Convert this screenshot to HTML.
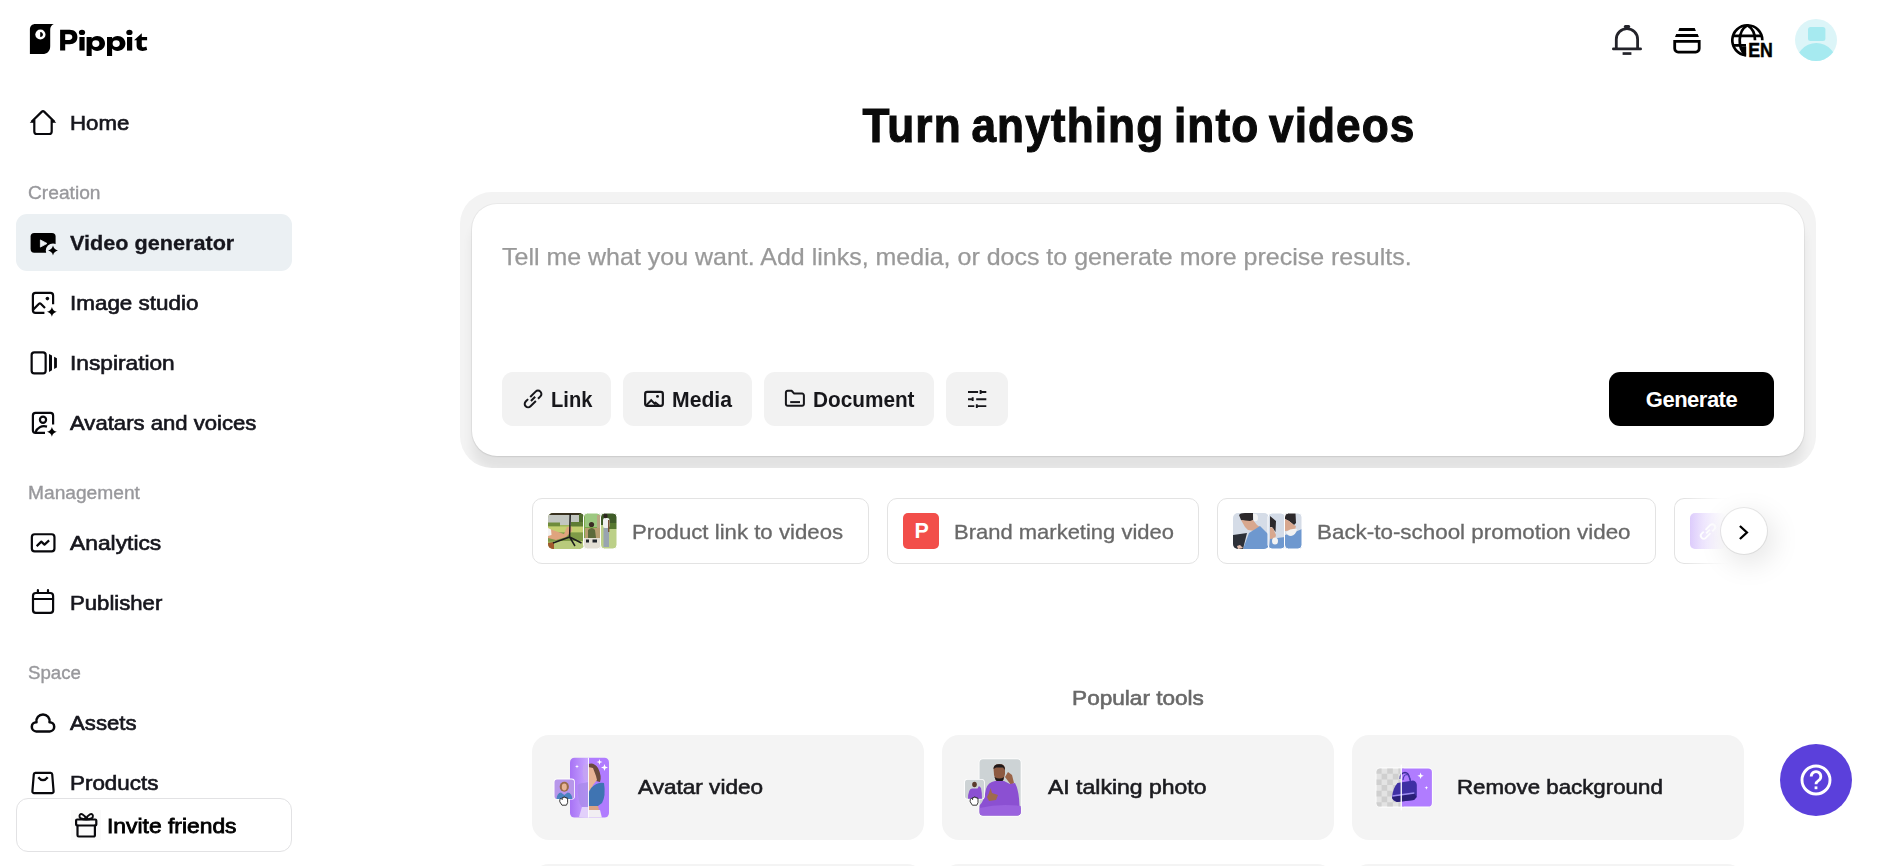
<!DOCTYPE html>
<html lang="en">
<head>
<meta charset="utf-8">
<title>Pippit</title>
<style>
*{box-sizing:border-box;margin:0;padding:0}
html,body{width:1903px;height:866px;overflow:hidden;background:#fff}
body{font-family:"Liberation Sans",sans-serif;color:#1c1c1f;position:relative;-webkit-font-smoothing:antialiased}
.abs{position:absolute}
svg{display:block}
/* sidebar */
.nav{position:absolute;left:16px;width:276px;height:57px;border-radius:11px}
.nav svg{position:absolute;left:12px;top:12.5px;width:30px;height:30px}
.nav span{position:absolute;left:54px;top:0;line-height:57px;font-size:21px;white-space:nowrap;color:#16161d;-webkit-text-stroke:0.65px #16161d;margin-top:-0.4px;transform:scaleX(1.06);transform-origin:0 50%}
.nav.on{background:#ebf0f3}
.nav.on span{font-weight:700;-webkit-text-stroke:0.3px #16161d;transform:scaleX(1.03)}
.sec{position:absolute;left:28px;font-size:18px;line-height:24px;color:#98989c;white-space:nowrap;-webkit-text-stroke:0.35px #98989c;transform:scaleX(1.065);transform-origin:0 50%;margin-top:1px}
.invite{position:absolute;left:16px;top:798px;width:276px;height:54px;border:1px solid #e2e2e4;border-radius:12px;background:#fff}
.invite svg{position:absolute;left:57px;top:13px;width:27px;height:27px}
.invite span{position:absolute;left:89.9px;top:0;line-height:53px;font-size:21px;color:#000;white-space:nowrap;-webkit-text-stroke:0.8px #000;transform:scaleX(1.088);transform-origin:0 50%}
.invite i{position:absolute;left:54px;top:11px;width:29.5px;height:29.5px;background:#fafafa}
/* main */
h1{position:absolute;left:461px;width:1356px;top:96.5px;transform:scaleX(.92);text-align:center;font-size:48px;line-height:58px;font-weight:700;color:#0a0a0a;letter-spacing:1.2px;word-spacing:-4px;white-space:nowrap;-webkit-text-stroke:1.1px #0a0a0a}
.outer{position:absolute;left:460px;top:192px;width:1356px;height:276px;border-radius:32px;background:#f3f3f3;overflow:hidden}
.inner{position:absolute;left:12px;top:12px;width:1332px;height:252px;border-radius:25px;background:#fff;box-shadow:0 0 0 1px rgba(0,0,0,.04),0 1px 2px rgba(0,0,0,.06),0 15px 11px rgba(0,0,0,.07)}
.ph{position:absolute;left:30px;top:38px;font-size:24px;line-height:30px;color:#999;-webkit-text-stroke:0.25px #999;white-space:nowrap;transform:scaleX(1.041);transform-origin:0 50%}
.btn{position:absolute;top:168px;height:54px;border-radius:11px;background:#f2f2f2}
.btn svg{position:absolute;left:20px;top:16px;width:22px;height:22px}
.btn span{position:absolute;left:49px;top:0;line-height:55px;font-size:22px;font-weight:700;color:#17171b;white-space:nowrap;transform-origin:0 50%}
.gen{position:absolute;left:1137px;top:168px;width:165px;height:54px;border-radius:11px;background:#000;color:#fff;text-align:center;line-height:56px;font-size:22px;font-weight:700;letter-spacing:-.5px}
.chip{position:absolute;top:498px;height:66px;border:1px solid #e3e3e3;border-radius:10px;background:#fff}
.chip .t{position:absolute;top:0;line-height:65px;font-size:21px;color:#686868;-webkit-text-stroke:0.3px #686868;margin-top:.4px;white-space:nowrap;transform:scaleX(1.0575);transform-origin:0 50%}
.thumb{position:absolute;left:15px;top:14px;width:70px;height:36px;border-radius:5px;overflow:hidden}
.pop{position:absolute;left:460px;width:1356px;top:684px;text-align:center;font-size:21px;line-height:28px;color:#686868;-webkit-text-stroke:0.6px #686868;transform:scaleX(1.075)}
.tool{position:absolute;top:735px;width:392px;height:105px;border-radius:17px;background:#f4f4f4}
.tool .t{position:absolute;left:105px;top:0;line-height:105px;font-size:21px;color:#1b1b1f;white-space:nowrap;-webkit-text-stroke:0.6px #1b1b1f;transform-origin:0 50%;margin-top:-.7px}
</style>
</head>
<body>
<!-- SIDEBAR -->
<div id="sidebar">
<svg class="abs" style="left:20px;top:14px;width:140px;height:52px" viewBox="20 14 140 52">
<path d="M35.5 24H53.8C51.2 25.2 50.2 27.3 50.2 30V46.2C50.2 51 47.2 54.1 42.4 54.1H29.9V29.6C29.9 26.1 32 24 35.5 24Z" fill="#000"/>
<circle cx="40.4" cy="34.5" r="5.1" fill="#fff"/>
<path d="M40.2 31.9C42.3 32.1 42.9 33.4 42.9 34.4C42.9 35.6 42.2 36.8 40.2 37Z" fill="#000"/>
<g id="logotext">
<path fill-rule="evenodd" d="M60.1 29.8H69.6C74.6 29.8 77.4 32.6 77.4 37C77.4 41.4 74.6 44.2 69.6 44.2H65.2V50.6H60.1ZM65.2 34.2V39.9H69.2C71.2 39.9 72.3 38.8 72.3 37.05C72.3 35.3 71.2 34.2 69.2 34.2Z" fill="#000"/>
<rect x="79.4" y="37" width="5.2" height="13.6" fill="#000"/><ellipse cx="82" cy="32.4" rx="3.1" ry="2.6" fill="#000"/>
<path fill-rule="evenodd" d="M86.6 37H91.7V38.6C92.9 37 94.9 36.1 97.2 36.1C101.6 36.1 105 39.2 105 43.5C105 47.8 101.6 50.9 97.2 50.9C94.9 50.9 92.9 50 91.7 48.6V55.9H86.6ZM95.8 40.2A3.6 3.4 0 1 0 95.8 47A3.6 3.4 0 1 0 95.8 40.2Z" fill="#000"/>
<path fill-rule="evenodd" transform="translate(20.4 0)" d="M86.6 37H91.7V38.6C92.9 37 94.9 36.1 97.2 36.1C101.6 36.1 105 39.2 105 43.5C105 47.8 101.6 50.9 97.2 50.9C94.9 50.9 92.9 50 91.7 48.6V55.9H86.6ZM95.8 40.2A3.6 3.4 0 1 0 95.8 47A3.6 3.4 0 1 0 95.8 40.2Z" fill="#000"/>
<rect x="127" y="37" width="5.2" height="13.6" fill="#000"/><ellipse cx="129.4" cy="32.4" rx="3.1" ry="2.6" fill="#000"/>
<path d="M134 40.2L141.8 33.3V37H147.1V40.3H141.8V45.4C141.8 46.7 142.5 47.3 143.7 47.3C144.6 47.3 145.6 47 146.3 46.5L147.2 49.8C146 50.5 144.4 50.9 142.6 50.9C138.8 50.9 136.6 49 136.6 45.5V40.2Z" fill="#000"/>
</g>
</svg>
<div class="nav" style="top:94px"><svg viewBox="0 0 30 30"><path d="M3.6 14.7 L13.9 4.6 a1.6 1.6 0 0 1 2.2 0 L26.4 14.7" fill="none" stroke="#08080c" stroke-width="2.2" stroke-linejoin="round" stroke-linecap="butt"/><path d="M1.7 15.7H6.4V11.3Z M28.3 15.7H23.6V11.3Z" fill="#08080c"/><path d="M6.3 13V24.4a2.6 2.6 0 0 0 2.6 2.6H21.1a2.6 2.6 0 0 0 2.6-2.6V13" fill="none" stroke="#08080c" stroke-width="2.2" stroke-linecap="round" stroke-linejoin="round"/></svg><span>Home</span></div>
<div class="nav on" style="top:214px"><svg viewBox="0 0 30 30"><defs><mask id="mv"><rect width="30" height="30" fill="#fff"/><circle cx="25" cy="23.6" r="7.2" fill="#000"/><path d="M12.4 12.9V20.1L19 16.5Z" fill="#000" stroke="#000" stroke-width="0.8" stroke-linejoin="round"/></mask></defs><rect x="2.6" y="5.9" width="25" height="19.8" rx="3.6" fill="#000" mask="url(#mv)"/><path d="M25 18.6Q25.9 22.6 29.9 23.5Q25.9 24.4 25 28.4Q24.1 24.4 20.1 23.5Q24.1 22.6 25 18.6Z" fill="#000"/></svg><span>Video generator</span></div>
<div class="nav" style="top:274px"><svg viewBox="0 0 30 30"><path d="M25.1 17.3V8.4a2.6 2.6 0 0 0-2.6-2.6H7.5a2.6 2.6 0 0 0-2.6 2.6V23.2a2.6 2.6 0 0 0 2.6 2.6H16.4" fill="none" stroke="#08080c" stroke-width="2.2" stroke-linejoin="round" stroke-linecap="butt"/><path d="M5.2 22.6L11 16.8a1.3 1.3 0 0 1 1.8 0L17 21" fill="none" stroke="#08080c" stroke-width="2.2" stroke-linejoin="round" stroke-linecap="butt"/><circle cx="19.4" cy="11.6" r="1.8" fill="#08080c"/><path d="M23.9 19.9Q24.799999999999997 23.900000000000002 28.799999999999997 24.8Q24.799999999999997 25.7 23.9 29.700000000000003Q23.0 25.7 19.0 24.8Q23.0 23.900000000000002 23.9 19.9Z" fill="#000"/></svg><span style="transform:scaleX(1.068)">Image studio</span></div>
<div class="nav" style="top:334px"><svg viewBox="0 0 30 30"><rect x="3.65" y="5.35" width="14" height="21.1" rx="2.6" fill="none" stroke="#08080c" stroke-width="2.2" stroke-linecap="round" stroke-linejoin="round"/><path d="M21 6.9L24 8.4V23.2L21 25Z M26.1 9.8L28.9 11.2V20.6L26.1 22Z" fill="#08080c"/></svg><span style="transform:scaleX(1.081)">Inspiration</span></div>
<div class="nav" style="top:394px"><svg viewBox="0 0 30 30"><path d="M25.1 17.5V8.4a2.6 2.6 0 0 0-2.6-2.6H7.5a2.6 2.6 0 0 0-2.6 2.6V23.2a2.6 2.6 0 0 0 2.6 2.6H17" fill="none" stroke="#08080c" stroke-width="2.2" stroke-linejoin="round" stroke-linecap="butt"/><circle cx="15" cy="12.8" r="3.1" fill="none" stroke="#08080c" stroke-width="2.2" stroke-linecap="round" stroke-linejoin="round"/><path d="M7.6 25.2C9 20.6 13.6 18.2 19 19.6" fill="none" stroke="#08080c" stroke-width="2.2" stroke-linejoin="round" stroke-linecap="butt"/><path d="M23.9 19.9Q24.799999999999997 23.900000000000002 28.799999999999997 24.8Q24.799999999999997 25.7 23.9 29.700000000000003Q23.0 25.7 19.0 24.8Q23.0 23.900000000000002 23.9 19.9Z" fill="#000"/></svg><span style="transform:scaleX(1.053)">Avatars and voices</span></div>
<div class="nav" style="top:514px"><svg viewBox="0 0 30 30"><rect x="3.85" y="7.25" width="22.6" height="17.1" rx="2.8" fill="none" stroke="#08080c" stroke-width="2.2" stroke-linecap="round" stroke-linejoin="round"/><path d="M9.5 18.4L13.3 14.6L16.5 17.6L20.3 14.1" fill="none" stroke="#08080c" stroke-width="2.2" stroke-linejoin="round" stroke-linecap="square"/></svg><span style="transform:scaleX(1.086)">Analytics</span></div>
<div class="nav" style="top:574px"><svg viewBox="0 0 30 30"><rect x="5" y="6" width="20.1" height="19.8" rx="2.8" fill="none" stroke="#08080c" stroke-width="2.2" stroke-linecap="round" stroke-linejoin="round"/><path d="M5 12H25.1M9.9 3.2V6M20 3.2V6" fill="none" stroke="#08080c" stroke-width="2.2" stroke-linecap="round" stroke-linejoin="round"/></svg><span style="transform:scaleX(1.054)">Publisher</span></div>
<div class="nav" style="top:694px"><svg viewBox="0 0 30 30"><path d="M8.3 24.4A4.6 4.6 0 0 1 8.5 15.2A6.6 6.6 0 1 1 21.5 15.2A4.6 4.6 0 0 1 21.7 24.4Z" fill="none" stroke="#08080c" stroke-width="2.5" stroke-linecap="round" stroke-linejoin="round"/></svg><span style="transform:scaleX(1.056)">Assets</span></div>
<div class="nav" style="top:754px"><svg viewBox="0 0 30 30"><path d="M7.4 5.8H22.6a1.6 1.6 0 0 1 1.6 1.5L25.6 24.3a1.7 1.7 0 0 1-1.7 1.8H6.1a1.7 1.7 0 0 1-1.7-1.8L5.8 7.3a1.6 1.6 0 0 1 1.6-1.5Z" fill="none" stroke="#08080c" stroke-width="2.2" stroke-linecap="round" stroke-linejoin="round"/><path d="M10.3 10.2Q15 16.2 19.7 10.2" fill="none" stroke="#08080c" stroke-width="2.2" stroke-linejoin="round" stroke-linecap="butt"/></svg><span style="transform:scaleX(1.066)">Products</span></div>
<div class="sec" style="top:180px">Creation</div>
<div class="sec" style="top:480px">Management</div>
<div class="sec" style="top:660px;transform:scaleX(1.037)">Space</div>
<div class="invite"><i></i><svg viewBox="0 0 27 27"><rect x="2.1" y="7.5" width="20.2" height="6" rx="1" fill="none" stroke="#08080c" stroke-width="2.2" stroke-linecap="round" stroke-linejoin="round"/><path d="M3.5 13.5V23.3a1.2 1.2 0 0 0 1.2 1.2H19.7a1.2 1.2 0 0 0 1.2-1.2V13.5" fill="none" stroke="#08080c" stroke-width="2.2" stroke-linecap="round" stroke-linejoin="round"/><path d="M12.2 7.3C10.6 2.2 6 0.4 5.5 3.8C5.2 6.2 7.5 7.4 12.2 7.4C16.9 7.4 19.2 6.2 18.9 3.8C18.4 0.4 13.8 2.2 12.2 7.3Z" fill="none" stroke="#08080c" stroke-linecap="round" stroke-linejoin="round" stroke-width="2"/></svg><span>Invite friends</span></div>
</div>
<!-- TOPBAR -->
<div id="topbar">
<svg class="abs" style="left:1607px;top:20px;width:40px;height:40px" viewBox="1607 20 40 40">
<path d="M1616.3 49V39.35a10.65 10.65 0 0 1 21.3 0V49" fill="none" stroke="#23232a" stroke-width="2.8" stroke-linejoin="round" stroke-linecap="butt"/>
<path d="M1613.4 48.9H1640.6" fill="none" stroke="#23232a" stroke-width="2.8" stroke-linecap="round" stroke-linejoin="round"/>
<path d="M1622.6 53.55H1631.4" fill="none" stroke="#23232a" stroke-width="2.7"/>
<path d="M1625.3 26.4H1628.7" fill="none" stroke="#23232a" stroke-width="3" stroke-linecap="round"/>
</svg>
<svg class="abs" style="left:1667px;top:20px;width:40px;height:40px" viewBox="1667 20 40 40">
<path d="M1679.4 27.9H1694.7L1695.9 30.9H1678.2Z M1676.2 33.9H1697.7L1698.9 36.9H1675Z" fill="#000"/>
<path d="M1674.7 41.4H1699.2V48.6a3.5 3.5 0 0 1-3.5 3.5H1678.2a3.5 3.5 0 0 1-3.5-3.5Z" fill="none" stroke="#000" stroke-width="2.8" stroke-linejoin="miter"/>
</svg>
<svg class="abs" style="left:1727px;top:18px;width:50px;height:44px" viewBox="1727 18 50 44">
<g fill="none" stroke="#000" stroke-width="2.7">
<path d="M1762.3 40.2A15 15 0 1 0 1745.9 55.2"/>
<path d="M1733.2 35.8H1761.6M1732.6 45.3H1746"/>
<path d="M1747.2 25.4C1737.5 31 1737.5 48 1745.5 55"/>
<path d="M1747.6 25.4C1752 28 1755 33 1755 40.2"/>
</g>
<path d="M1740.5 47L1746.2 46.6V56.6L1744.6 56.4Z" fill="#000"/>
<text x="1748.2" y="56.8" font-family="Liberation Sans, sans-serif" font-weight="700" font-size="20" textLength="24.6" lengthAdjust="spacingAndGlyphs" fill="#000" stroke="#000" stroke-width="0.5">EN</text>
</svg>
<svg class="abs" style="left:1795px;top:19px;width:42px;height:42px" viewBox="0 0 42 42">
<defs><clipPath id="av"><circle cx="21" cy="21" r="21"/></clipPath></defs>
<circle cx="21" cy="21" r="21" fill="#dcf5f8"/>
<g clip-path="url(#av)" fill="#a6eaf0"><rect x="13" y="8" width="17.4" height="14" rx="2.5"/><ellipse cx="21.3" cy="48" rx="21.5" ry="24"/></g>
</svg>
</div>
<!-- MAIN -->
<div id="main">
<h1>Turn anything into videos</h1>
<div class="outer"><div class="inner">
<div class="ph">Tell me what you want. Add links, media, or docs to generate more precise results.</div>
<div class="btn" style="left:30px;width:109px"><svg viewBox="0 0 22 22"><g transform="translate(11.05 10.95) rotate(-45)" fill="none" stroke="#17171b" stroke-width="2" stroke-linecap="butt" stroke-linejoin="round"><path d="M-0.6 -3.4H7A3.4 3.4 0 0 1 7 3.4H3.6"/><path d="M0.6 3.4H-7A3.4 3.4 0 0 1 -7 -3.4H-3.6"/><path d="M-3 0H3"/></g></svg><span style="transform:scaleX(.915)">Link</span></div>
<div class="btn" style="left:151px;width:129px"><svg viewBox="0 0 22 22"><rect x="2.15" y="3.95" width="17.7" height="13.9" rx="2" fill="none" stroke="#17171b" stroke-linecap="butt" stroke-linejoin="round" stroke-width="2.2"/><path d="M3.2 17.4L8.2 12.2L12.6 16.6" fill="none" stroke="#17171b" stroke-width="2" stroke-linecap="butt" stroke-linejoin="miter"/><path d="M11.4 15.4L12.4 14.5L16 17.6" fill="none" stroke="#17171b" stroke-width="2" stroke-linecap="butt" stroke-linejoin="round"/><circle cx="14.5" cy="8.4" r="1.45" fill="#17171b"/></svg><span style="transform:scaleX(.962)">Media</span></div>
<div class="btn" style="left:292px;width:170px"><svg viewBox="0 0 22 22"><path d="M1.9 4.6a1.8 1.8 0 0 1 1.8-1.8H7.6L10.2 5.6H18.1a1.8 1.8 0 0 1 1.8 1.8V15.9a1.8 1.8 0 0 1-1.8 1.8H3.7a1.8 1.8 0 0 1-1.8-1.8Z" fill="none" stroke="#17171b" stroke-width="2" stroke-linecap="butt" stroke-linejoin="round"/><path d="M6.2 14.1H16" fill="none" stroke="#17171b" stroke-width="2" stroke-linecap="butt" stroke-linejoin="round"/></svg><span style="transform:scaleX(.944)">Document</span></div>
<div class="btn" style="left:474px;width:62px"><svg viewBox="0 0 22 22"><path d="M2 4H12.1M13.7 4H20.3M14.6 2.1V5.9M2 11.2H7.6M10.2 11.2H20.3M6.7 9.3V13.1M2 18.1H8.3M9.9 18.1H20.3M10.8 16.2V20" fill="none" stroke="#17171b" stroke-linecap="butt" stroke-linejoin="round" stroke-width="1.9"/></svg></div>
<div class="gen">Generate</div>
</div></div>
<div class="chip" style="left:532px;width:337px"><div class="thumb" style="border-radius:0;overflow:visible"><svg viewBox="0 0 70 36" width="70" height="36">
<defs><clipPath id="c1a"><rect x="0" y="0" width="36" height="36" rx="5"/></clipPath><clipPath id="c1b"><rect x="35.5" y="0" width="17.5" height="36" rx="4"/></clipPath><clipPath id="c1c"><rect x="52.5" y="0" width="16.5" height="36" rx="4"/></clipPath></defs>
<g clip-path="url(#c1a)"><rect width="36" height="36" fill="#9fb45c"/><rect width="36" height="2.4" fill="#3a3220"/><rect y="2" width="33" height="10" fill="#c2c6c0"/><rect x="31" y="1" width="5" height="14" fill="#4d6a2c"/><rect y="9.5" width="12" height="4" fill="#6f8c3c"/><rect x="23" y="9" width="13" height="6" fill="#5f7d34"/><rect y="13.5" width="36" height="6" fill="#c4cf70"/><rect y="19.5" width="36" height="9" fill="#7f9a48"/><rect x="6" y="28" width="30" height="8" fill="#b8ca7c"/>
<path d="M0 15L3 16.5L16 21L19 14L23.5 13.5L24 18L18 24L8 27L0 25Z" fill="#dfa47e"/><path d="M0 15L3 16.5L3.5 22L0 23Z" fill="#f4f4f4"/><path d="M0 30L6 29L6 36L0 36Z" fill="#a0582c"/>
<path d="M22.2 1L21.6 24M21.6 24L33.5 30M21.6 24L27 33M21.6 24L5 30" stroke="#1c1c1c" stroke-width="1.5" fill="none"/></g>
<g clip-path="url(#c1b)"><rect x="35" width="19" height="36" fill="#7aa74a"/><rect x="37" y="0" width="15" height="14" fill="#9cc880"/><rect x="49" y="2" width="4" height="14" fill="#b8a682"/><rect x="37" y="15" width="16" height="10" fill="#b89e70"/><path d="M40 17Q44 13 47 17L48 25H40Z" fill="#5d6a3a"/><circle cx="43.5" cy="11.5" r="2.6" fill="#3a2c24"/><rect x="36" y="25" width="18" height="11" fill="#e3dfd4"/><rect x="38" y="26.5" width="3" height="3" fill="#22262c"/><rect x="44.5" y="26.5" width="4.5" height="3" fill="#22262c"/></g>
<rect x="35.5" y="0" width="17.5" height="36" rx="4" fill="none" stroke="#fff" stroke-width="1"/>
<g clip-path="url(#c1c)"><rect x="52" width="18" height="36" fill="#bcd088"/><rect x="52" width="18" height="12" fill="#3f5c28"/><rect x="60" y="10" width="10" height="6" fill="#56782f"/><rect x="55" y="5" width="6.5" height="10" rx="2" fill="#f0f0f0"/><rect x="55.5" y="0.5" width="4" height="4.8" rx="2" fill="#2c2420"/><rect x="55.5" y="15" width="5.5" height="19" fill="#98a4b0"/><rect x="60" y="7" width="1.4" height="12" fill="#7a5238"/></g>
<rect x="52.5" y="0" width="16.5" height="36" rx="4" fill="none" stroke="#fff" stroke-width="1"/>
</svg></div><div class="t" style="left:99px">Product link to videos</div></div>
<div class="chip" style="left:887px;width:312px"><div class="thumb" style="width:36px;background:#f24e4a;color:#fff;font-weight:700;font-size:21.500px;line-height:36.500px;text-align:center;text-indent:1.500px">P</div><div class="t" style="left:66px;transform:scaleX(1.047)">Brand marketing video</div></div>
<div class="chip" style="left:1217px;width:439px"><div class="thumb" style="border-radius:0;overflow:visible"><svg viewBox="0 0 70 36" width="70" height="36">
<defs><clipPath id="c3a"><rect x="0" y="0" width="36" height="36" rx="5"/></clipPath><clipPath id="c3b"><rect x="35" y="0" width="17" height="36" rx="4"/></clipPath><clipPath id="c3c"><rect x="51.5" y="0" width="17.5" height="36" rx="4"/></clipPath></defs>
<g clip-path="url(#c3a)"><rect width="36" height="36" fill="#d5dce7"/><path d="M6 2Q7 0 12 0H20L20 7L17 9L12 8L8 7Z" fill="#2d292b"/><path d="M8 7L17 8L20 7L24 12L27 14L22 18L15 17L12 14Z" fill="#d8a78e"/><path d="M20 1Q25 0 25 5Q25 9 21 8Z" fill="#f2f2f2"/><path d="M16 20L27 13L36 22V36H10Z" fill="#6e98cf"/><path d="M0 22L7 21L14 20L10 36H0Z" fill="#2c3038"/><path d="M4 33L7 32L10 35L5 36Z" fill="#e6c0b0"/></g>
<g clip-path="url(#c3b)"><rect x="35" width="18" height="36" fill="#d3dbe7"/><path d="M37 3L43 8L42.5 19L39 14L37 14Z" fill="#2d292b"/><path d="M37 14L40 15L43 22L42 26L37 26Z" fill="#d8a78e"/><path d="M37 26L52 24V36H36Z" fill="#6e98cf"/><ellipse cx="42" cy="28" rx="3" ry="3.5" fill="#f2f2f2"/></g>
<rect x="35" y="0" width="17" height="36" rx="4" fill="none" stroke="#fff" stroke-width="1"/>
<g clip-path="url(#c3c)"><rect x="51" width="19" height="36" fill="#d5dce7"/><path d="M52 0H62.500L63 10L61 12L56 8L52 6Z" fill="#2d292b"/><path d="M52 6L56 8L61 12L63 13L62 17L52 18Z" fill="#d8a78e"/><path d="M52 22L62 19L69 16V36H52Z" fill="#6e98cf"/><path d="M53 19Q58 15 64 16Q63 22 58 23Q54 23 53 19Z" fill="#f2f2f2"/></g>
<rect x="51.500" y="0" width="17.5" height="36" rx="4" fill="none" stroke="#fff" stroke-width="1"/>
</svg></div><div class="t" style="left:99px;transform:scaleX(1.066)">Back-to-school promotion video</div></div>
<div class="chip" style="left:1674px;width:120px;border-right:0;border-radius:10px 0 0 10px"><div class="thumb" style="width:36px;background:linear-gradient(90deg,#d6c2fb,#e6dafd)"><svg viewBox="0 0 36 36" width="36" height="36"><g transform="translate(18 18.500) rotate(-45) scale(.86)" fill="none" stroke="#fff" stroke-width="2.200" opacity=".9"><path d="M-0.600 -3.400H7A3.400 3.400 0 0 1 7 3.400H3.600"/><path d="M0.600 3.400H-7A3.400 3.400 0 0 1 -7 -3.400H-3.600"/><path d="M-3 0H3"/></g></svg></div></div>
<div class="abs" style="left:1684px;top:490px;width:150px;height:82px;background:linear-gradient(90deg,rgba(255,255,255,0) 0,rgba(255,255,255,.5) 13%,rgba(255,255,255,.9) 24%,#fff 30%)"></div>
<div class="abs" style="left:1721px;top:508px;width:46px;height:46px;border-radius:50%;background:#fff;box-shadow:0 0 0 1px rgba(0,0,0,.08),5px 8px 28px 2px rgba(0,0,0,.10)"><svg viewBox="0 0 46 46" style="width:46px;height:46px"><path d="M18.900 18L25.900 24.500L18.900 31" fill="none" stroke="#000" stroke-width="2.300"/></svg></div>
<div class="pop">Popular tools</div>
<div class="tool" style="left:532px"><svg class="abs" style="left:18px;top:18px;width:66px;height:70px" viewBox="550 753 66 70">
<defs><clipPath id="t1a"><rect x="570" y="757.800" width="39" height="59.7" rx="4.5"/></clipPath><clipPath id="t1b"><rect x="554.500" y="779.400" width="19.600" height="19.500" rx="2.500"/></clipPath><linearGradient id="g1" x1="0" x2="1"><stop offset="0" stop-color="#a772f5"/><stop offset="1" stop-color="#caa8ff"/></linearGradient></defs>
<g clip-path="url(#t1a)"><rect x="570" y="757" width="18.400" height="61" fill="url(#g1)"/><rect x="588.400" y="757" width="21" height="61" fill="#b07cff"/>
<path d="M577.500 786Q578 783 584 783L588.400 782V808L582 807Q578 804 577.500 786Z" fill="#a98aea" opacity=".8"/><path d="M583 766Q584 764 588.400 764V781L584 780Q582 774 583 766Z" fill="#c4a4f0" opacity=".8"/><path d="M579 817L582 807H588.400V818Z" fill="#e2d0fb"/>
<path d="M588.400 764Q594 762 598 768Q602 776 600 782L596 781L592 770L588.400 768Z" fill="#6a4a3c"/><path d="M588.400 767L593 768L596 776L597 780L593 785L591 790L588.400 791Z" fill="#e8b496"/>
<path d="M591 788Q597 782 604 783Q606 796 602 803L598 806L588.400 806V793Z" fill="#3f74b2"/><path d="M588.400 806H598L599 810H588.400Z" fill="#d9a486"/><path d="M588.400 810H600L602 818H588.400Z" fill="#f1eef2"/>
<rect x="588" y="757" width="0.900" height="61" fill="#fff"/>
<path d="M599.500 759L600.200 761.300L602.500 762L600.200 762.700L599.500 765L598.800 762.700L596.500 762L598.800 761.300Z M604.500 764L605.400 766.600L608 767.500L605.400 768.400L604.500 771L603.600 768.400L601 767.500L603.600 766.600Z M577 764.500L577.500 766L579 766.500L577.500 767L577 768.500L576.500 767L575 766.500L576.500 766Z" fill="#fff"/></g>
<rect x="553.700" y="778.600" width="21.200" height="21" rx="3.400" fill="#fff"/>
<g clip-path="url(#t1b)"><rect x="554" y="779" width="21" height="21" fill="#b796ea"/><ellipse cx="564.300" cy="786.800" rx="4.600" ry="5" fill="#9a6a48"/><ellipse cx="564.300" cy="787" rx="2.500" ry="3.400" fill="#e8b496"/><path d="M556.500 799Q557 793 561 792.500L564.300 795L567.600 792.500Q572 793 572.300 799Z" fill="#4a82c0"/></g>
<g transform="translate(558.600 796.200)"><path d="M1.2 3.2L2.4 2.2L3.6 3.4V1.4H5V0.8H6.4V1.4H7.8V2H9V6.500L7.8 9H3.4L1.2 5.600Z" fill="#fff" stroke="#222" stroke-width="0.9" stroke-linejoin="round"/></g>
</svg><div class="t" style="left:105.7px;transform:scaleX(1.075)">Avatar video</div></div>
<div class="tool" style="left:942px"><svg class="abs" style="left:18px;top:18px;width:66px;height:70px" viewBox="960 753 66 70">
<defs><clipPath id="t2a"><rect x="979.500" y="759.200" width="41.200" height="56.400" rx="3.500"/></clipPath><clipPath id="t2b"><rect x="965" y="779.700" width="19" height="19" rx="2.500"/></clipPath></defs>
<rect x="978.700" y="758.400" width="42.800" height="58" rx="4.300" fill="#fff"/>
<g clip-path="url(#t2a)"><rect x="979" y="759" width="43" height="58" fill="#cdd3d5"/>
<path d="M993.500 768Q994 764 999.500 764Q1005 764 1005 769V774L1003.500 780Q999.500 783 995.500 780L994 775Z" fill="#8d5a42"/><path d="M993.500 769Q993.500 764 999.500 764.300Q1005 764.300 1005 770L1003 767.500H996Z" fill="#1e1a1c"/><path d="M994.500 777L996 780.500Q999.500 783 1003 780.500L1004 777Q999.500 780 994.500 777Z" fill="#1e1a1c"/>
<path d="M1005 777L1008 772L1012 775L1014 783L1011 785Z" fill="#9a6448"/>
<path d="M986 789Q988 782 995 781L1004 781L1010 784L1015 783Q1019 790 1019.500 806L1021 808V817H979V806Q984 802 986 789Z" fill="#8b50d2"/><path d="M979.500 808Q1000 803 1021 806V817H979.500Z" fill="#9a62de"/>
<path d="M989 793L990.500 788L992 793L998 795L996 800L989 801L987 797Z" fill="#a06a4c"/></g>
<rect x="964.200" y="778.900" width="20.600" height="20.600" rx="3.300" fill="#fff"/>
<g clip-path="url(#t2b)"><rect x="965" y="779" width="20" height="20" fill="#cdd3d5"/><ellipse cx="974.500" cy="784.500" rx="2.300" ry="2.800" fill="#5a3a2c"/><path d="M968 799Q968 789 972 788.500L977.500 788.500L979 786L981 788Q982 792 982 799Z" fill="#8b50d2"/></g>
<g transform="translate(969 796.200)"><path d="M1.2 3.2L2.4 2.2L3.6 3.4V1.4H5V0.8H6.4V1.4H7.8V2H9V6.500L7.8 9H3.4L1.2 5.600Z" fill="#fff" stroke="#222" stroke-width="0.9" stroke-linejoin="round"/></g>
</svg><div class="t" style="left:105.7px;transform:scaleX(1.095)">AI talking photo</div></div>
<div class="tool" style="left:1352px"><svg class="abs" style="left:18px;top:26px;width:66px;height:52px" viewBox="1370 761 66 52">
<defs><clipPath id="t3a"><rect x="1376.500" y="768.400" width="55.400" height="38.200" rx="3.700"/></clipPath></defs>
<rect x="1375.700" y="767.600" width="57" height="39.800" rx="4.500" fill="#fff"/>
<g clip-path="url(#t3a)"><rect x="1376" y="768" width="26" height="40" fill="#e3e3e3"/><path d="M1376.0 768.0h5.6v5.7h-5.6zM1387.2 768.0h5.6v5.7h-5.6zM1398.4 768.0h5.6v5.7h-5.6zM1381.6 773.7h5.6v5.7h-5.6zM1392.8 773.7h5.6v5.7h-5.6zM1376.0 779.4h5.6v5.7h-5.6zM1387.2 779.4h5.6v5.7h-5.6zM1398.4 779.4h5.6v5.7h-5.6zM1381.6 785.1h5.6v5.7h-5.6zM1392.8 785.1h5.6v5.7h-5.6zM1376.0 790.8h5.6v5.7h-5.6zM1387.2 790.8h5.6v5.7h-5.6zM1398.4 790.8h5.6v5.7h-5.6zM1381.6 796.5h5.6v5.7h-5.6zM1392.8 796.5h5.6v5.7h-5.6zM1376.0 802.2h5.6v5.7h-5.6zM1387.2 802.2h5.6v5.7h-5.6zM1398.4 802.2h5.6v5.7h-5.6z" fill="#cfcfcf"/><rect x="1401.200" y="768" width="32" height="40" fill="#b07cff"/>
<path d="M1400 779Q1400 773 1405 772.500Q1408.500 772.500 1409.500 778L1410.500 781" fill="none" stroke="#3a2c98" stroke-width="1.300"/><path d="M1403 780Q1403.500 774.500 1407 774.500Q1409.500 775 1410.500 781" fill="none" stroke="#4a3cb0" stroke-width="1.200"/>
<path d="M1397.500 783L1413 780.500Q1416.500 781 1416.800 785V797L1414 800L1397 802Q1392.500 801 1392 797Q1393 788 1397.500 783Z" fill="#3f30a4"/><path d="M1392 796.500L1414.500 793.500L1416.500 797L1414 800L1397 802L1392.500 799Z" fill="#2a1f78"/><path d="M1392.300 796L1414.300 793" stroke="#9c8cf0" stroke-width="1.300"/>
<path d="M1420.600 772.600L1421.500 774.900L1423.800 775.800L1421.500 776.700L1420.600 779L1419.700 776.700L1417.400 775.800L1419.700 774.900Z M1426.400 785.900L1426.900 787.300L1428.300 787.800L1426.900 788.300L1426.400 789.700L1425.900 788.300L1424.500 787.800L1425.900 787.300Z" fill="#fff"/></g>
<rect x="1400.600" y="764.600" width="1.300" height="45.700" fill="#fff"/>
</svg><div class="t" style="transform:scaleX(1.062)">Remove background</div></div>
<div class="tool" style="left:532px;top:864px"></div>
<div class="tool" style="left:942px;top:864px"></div>
<div class="tool" style="left:1352px;top:864px"></div>
<div class="abs" style="left:1780px;top:744px;width:72px;height:72px;border-radius:50%;background:#5b40db"><svg viewBox="0 0 72 72" style="width:72px;height:72px"><circle cx="36" cy="36" r="14" fill="none" stroke="#fff" stroke-width="2.9"/><path d="M31.2 32.4a4.8 4.8 0 1 1 7.2 4.2c-1.6 1-2.4 1.8-2.4 3.6" fill="none" stroke="#fff" stroke-width="2.8"/><rect x="34.6" y="42.4" width="2.8" height="2.8" fill="#fff"/></svg></div>
</div>
</body>
</html>
